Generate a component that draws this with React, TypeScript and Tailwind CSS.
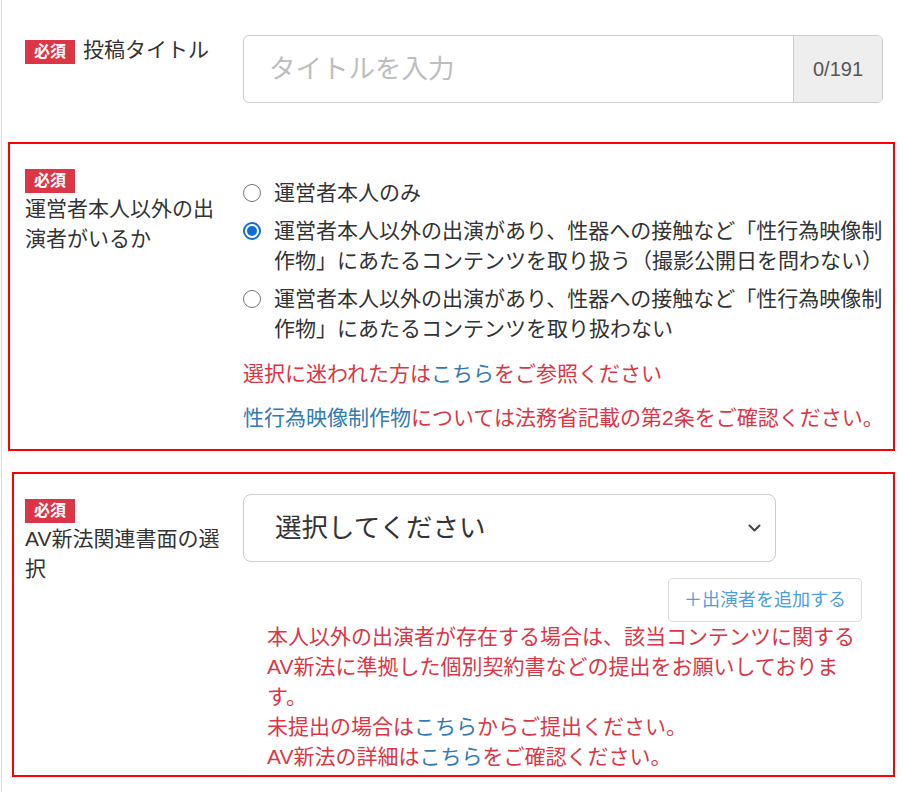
import React from "react";

const FONT = { fontFamily: '"Liberation Sans", "Noto Sans CJK JP", sans-serif' };

function Badge({ className = "" }: { className?: string }) {
  return (
    <div
      className={
        "flex items-center justify-center w-[50px] h-[24px] bg-[#dc3545] text-white text-[16px] font-bold leading-none shrink-0 " +
        className
      }
    >
      必須
    </div>
  );
}

function Radio({ checked }: { checked?: boolean }) {
  if (checked) {
    return (
      <span className="mt-[6px] w-[18px] h-[18px] rounded-full border-2 border-[#106ed6] flex items-center justify-center shrink-0 bg-white">
        <span className="w-[10px] h-[10px] rounded-full bg-[#106ed6]" />
      </span>
    );
  }
  return <span className="mt-[6px] w-[18px] h-[18px] rounded-full border-[1.5px] border-[#767676] shrink-0 bg-white" />;
}

function Option({ checked, lines }: { checked?: boolean; lines: string[] }) {
  return (
    <div className="flex items-start gap-[13px]">
      <Radio checked={checked} />
      <div className="whitespace-nowrap">
        {lines.map((l, i) => (
          <div key={i}>{l}</div>
        ))}
      </div>
    </div>
  );
}

export default function App() {
  return (
    <div style={FONT} className="ml-px border-l border-[#dedede] min-h-[792px] bg-white text-[21px] leading-[30px] text-[#333]">
      {/* Row 1 */}
      <div className="flex items-start pt-[35px] pl-[23px] pr-[20px]">
        <div className="w-[205px] flex items-start gap-[8px] shrink-0">
          <Badge className="mt-[5px]" />
          <span>投稿タイトル</span>
        </div>
        <div className="ml-[13px] flex-1 flex h-[68px] border border-[#cccccc] rounded-[6px] overflow-hidden">
          <div className="flex-1 flex items-center pl-[25px] text-[26.5px] text-[#bdbdbd]">タイトルを入力</div>
          <div className="w-[89px] border-l border-[#cccccc] bg-[#eeeeee] flex items-center justify-center text-[20px] text-[#555]">
            0/191
          </div>
        </div>
      </div>

      {/* Box 2 */}
      <div className="mt-[39px] ml-[6px] mr-[8px] border-2 border-[#ff0000] flex items-start pl-[15px] pr-[8px] pt-[25px] pb-[16px]">
        <div className="w-[205px] shrink-0">
          <Badge />
          <div className="mt-[1px]">
            運営者本人以外の出
            <br />
            演者がいるか
          </div>
        </div>
        <div className="ml-[13px] flex-1 pt-[9px]">
          <div className="flex flex-col gap-[8px]">
            <Option lines={["運営者本人のみ"]} />
            <Option
              checked
              lines={[
                "運営者本人以外の出演があり、性器への接触など「性行為映像制",
                "作物」にあたるコンテンツを取り扱う（撮影公開日を問わない）",
              ]}
            />
            <Option
              lines={[
                "運営者本人以外の出演があり、性器への接触など「性行為映像制",
                "作物」にあたるコンテンツを取り扱わない",
              ]}
            />
          </div>
          <div className="mt-[15px] text-[#dc3545] whitespace-nowrap">
            選択に迷われた方は<span className="text-[#337ab7]">こちら</span>をご参照ください
          </div>
          <div className="mt-[14px] text-[#dc3545] whitespace-nowrap">
            <span className="text-[#337ab7]">性行為映像制作物</span>については法務省記載の第2条をご確認ください。
          </div>
        </div>
      </div>

      {/* Box 3 */}
      <div className="mt-[21px] ml-[10px] mr-[8px] border-2 border-[#ff0000] flex items-start pl-[11px] pr-[31px] pt-[20px] pb-[3px]">
        <div className="w-[205px] shrink-0 pt-[5px]">
          <Badge />
          <div className="mt-px">
            AV新法関連書面の選
            <br />
            択
          </div>
        </div>
        <div className="ml-[13px] flex-1 flex flex-col">
          <div className="w-[533px] h-[68px] border border-[#cccccc] rounded-[8px] flex items-center justify-between pl-[31px] pr-[14px]">
            <span className="text-[26.5px] text-[#333]">選択してください</span>
            <svg width="13" height="8" viewBox="0 0 13 8" fill="none">
              <path d="M1.5 1.5 L6.5 6.5 L11.5 1.5" stroke="#444" strokeWidth="2" strokeLinecap="round" strokeLinejoin="round" />
            </svg>
          </div>
          <div className="self-end mt-[16px] h-[44px] px-[15px] border border-[#dddddd] rounded-[4px] flex items-center text-[18px] text-[#4a9ee2]">
            ＋出演者を追加する
          </div>
          <div className="pl-[24px] text-[#dc3545] whitespace-nowrap">
            <div>本人以外の出演者が存在する場合は、該当コンテンツに関する</div>
            <div>AV新法に準拠した個別契約書などの提出をお願いしておりま</div>
            <div>す。</div>
            <div>
              未提出の場合は<span className="text-[#337ab7]">こちら</span>からご提出ください。
            </div>
            <div>
              AV新法の詳細は<span className="text-[#337ab7]">こちら</span>をご確認ください。
            </div>
          </div>
        </div>
      </div>
    </div>
  );
}
